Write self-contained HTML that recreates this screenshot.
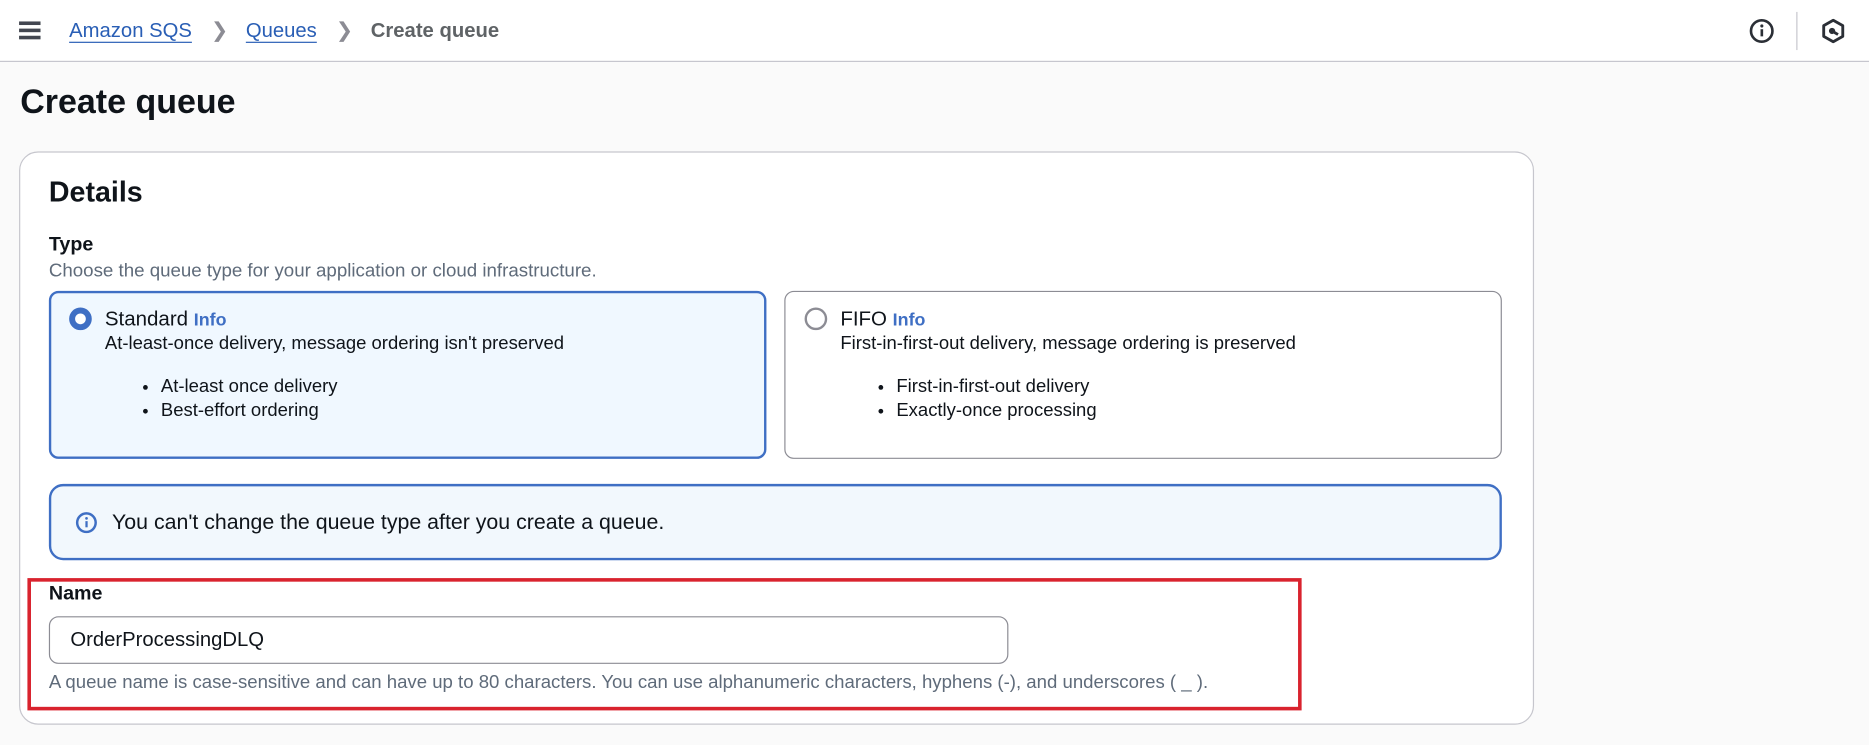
<!DOCTYPE html>
<html><head><meta charset="utf-8"><style>
*{box-sizing:border-box;margin:0;padding:0}
body{width:1869px;height:745px;background:#fafafa;font-family:"Liberation Sans",sans-serif;color:#0f141a;position:relative;overflow:hidden}
#w{position:absolute;left:0;top:0;width:1568px;height:625px;transform:scale(1.19196);transform-origin:0 0}
.a{position:absolute;white-space:nowrap}
.hdr{position:absolute;left:0;top:0;width:1568px;height:52px;background:#fff;border-bottom:1px solid #c6c6cd}
.lnk{color:#295eb5;text-decoration:underline;text-underline-offset:4px;text-decoration-thickness:1px}
.tile{position:absolute;border-radius:8px}
.gray{color:#5f6b7a}
ul{list-style:disc}
</style></head><body><div id="w">
<div class="hdr">
 <div class="a" style="left:16px;top:18px;width:18px;height:3px;background:#424650;box-shadow:0 6px 0 #424650,0 12px 0 #424650"></div>
 <div class="a" style="left:58px;top:16px;font-size:17px"><span class="lnk">Amazon SQS</span><span style="color:#8c8c94;margin:0 15px 0 16px">&#x276F;</span><span class="lnk">Queues</span><span style="color:#8c8c94;margin:0 15px 0 16px">&#x276F;</span><b style="color:#5f6366">Create queue</b></div>
 <svg class="a" style="left:1467px;top:15px" width="22" height="22" viewBox="0 0 22 22"><circle cx="11" cy="11" r="9" fill="none" stroke="#2b2f36" stroke-width="2.2"/><rect x="10" y="9.5" width="2.2" height="6" fill="#2b2f36"/><circle cx="11.1" cy="6.8" r="1.3" fill="#2b2f36"/></svg>
 <div class="a" style="left:1507px;top:10px;width:1px;height:32px;background:#c6c6cd"></div>
 <svg class="a" style="left:1527px;top:15px" width="22" height="22" viewBox="0 0 22 22"><path d="M11 2 L19 6.5 V15.5 L11 20 L3 15.5 V6.5 Z" fill="none" stroke="#2b2f36" stroke-width="2.4" stroke-linejoin="round"/><circle cx="10" cy="11" r="2.6" fill="#2b2f36"/><path d="M10 11 L15 14" stroke="#2b2f36" stroke-width="2.4"/></svg>
</div>
<div class="a" style="left:17px;top:70px;font-size:28.5px;font-weight:bold">Create queue</div>
<div class="a" style="left:16px;top:127px;width:1271px;height:481px;background:#fff;border:1px solid #c6c6cd;border-radius:16px"></div>
<div class="a" style="left:41px;top:148px;font-size:24px;font-weight:bold">Details</div>
<div class="a" style="left:41px;top:196px;font-size:16.5px;font-weight:bold">Type</div>
<div class="a gray" style="left:41px;top:219px;font-size:15.7px">Choose the queue type for your application or cloud infrastructure.</div>

<div class="tile" style="left:41px;top:244px;width:602px;height:141px;background:#f0f8ff;border:2px solid #3f6fc4"></div>
<div class="a" style="left:58px;top:258px;width:19px;height:19px;border-radius:50%;border:5px solid #3f6fc4;background:#fff"></div>
<div class="a" style="left:88px;top:257px;font-size:17.2px">Standard <b style="color:#3f6fc4;font-size:15px">Info</b></div>
<div class="a" style="left:88px;top:280px;font-size:15.5px">At-least-once delivery, message ordering isn't preserved</div>
<ul class="a" style="left:135px;top:315px;font-size:15.5px;line-height:20px"><li>At-least once delivery</li><li>Best-effort ordering</li></ul>

<div class="tile" style="left:658px;top:244px;width:602px;height:141px;background:#fff;border:1px solid #8c8c94"></div>
<div class="a" style="left:675px;top:258px;width:19px;height:19px;border-radius:50%;border:2px solid #8c8c94;background:#fff"></div>
<div class="a" style="left:705px;top:257px;font-size:17.2px">FIFO <b style="color:#3f6fc4;font-size:15px">Info</b></div>
<div class="a" style="left:705px;top:280px;font-size:15.5px">First-in-first-out delivery, message ordering is preserved</div>
<ul class="a" style="left:752px;top:315px;font-size:15.5px;line-height:20px"><li>First-in-first-out delivery</li><li>Exactly-once processing</li></ul>

<div class="tile" style="left:41px;top:406px;width:1219px;height:64px;background:#f2f8fd;border:2px solid #3f6fc4;border-radius:12px"></div>
<svg class="a" style="left:63px;top:429px" width="19" height="19" viewBox="0 0 22 22"><circle cx="11" cy="11" r="9" fill="none" stroke="#3f6fc4" stroke-width="2.4"/><rect x="10" y="9.5" width="2.2" height="6" fill="#3f6fc4"/><circle cx="11.1" cy="6.8" r="1.3" fill="#3f6fc4"/></svg>
<div class="a" style="left:94px;top:428px;font-size:17.9px">You can't change the queue type after you create a queue.</div>

<div class="a" style="left:23px;top:485px;width:1069px;height:111px;border:3px solid #d9232e"></div>
<div class="a" style="left:41px;top:489px;font-size:16.5px;font-weight:bold">Name</div>
<div class="a" style="left:41px;top:517px;width:805px;height:40px;border:1px solid #8c8c94;border-radius:8px;background:#fff"></div>
<div class="a" style="left:59px;top:527px;font-size:17px">OrderProcessingDLQ</div>
<div class="a gray" style="left:41px;top:564px;font-size:15.6px">A queue name is case-sensitive and can have up to 80 characters. You can use alphanumeric characters, hyphens (-), and underscores ( _ ).</div>
</div></body></html>
